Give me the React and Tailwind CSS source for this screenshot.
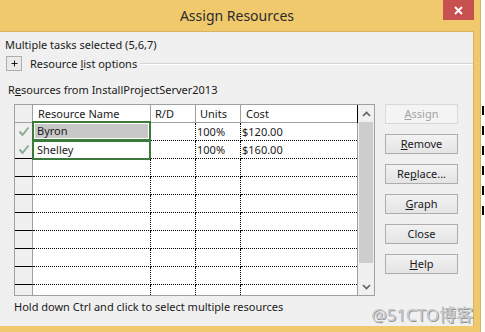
import React from "react";

const F = "font-['Noto_Sans',sans-serif]";

function Check() {
  return (
    <svg width="12" height="11" viewBox="0 0 12 11" className="block">
      <path d="M1.5 5.5 L4.5 9 L10.5 1.5" fill="none" stroke="#86AE94" strokeWidth="2" />
    </svg>
  );
}

function Btn({ children, disabled }) {
  return (
    <div
      className={
        "h-[20px] w-[73px] flex items-center justify-center border text-[11px] leading-[16px] " +
        (disabled
          ? "border-[#D9D9D9] bg-[#F4F4F4] text-[#A3A3A3]"
          : "border-[#ADADAD] bg-gradient-to-b from-[#F2F2F2] to-[#E4E4E4] text-[#1a1a1a]")
      }
    >
      {children}
    </div>
  );
}

const rows = [
  { name: "Byron", units: "100%", cost: "$120.00", check: true, sel: true },
  { name: "Shelley", units: "100%", cost: "$160.00", check: true },
  {}, {}, {}, {}, {}, {}, {}, {},
];

export default function App() {
  return (
    <div className={"w-[485px] h-[332px] bg-[#F0C96D] overflow-hidden flex " + F}>
      <div className="w-[481px] flex flex-col border-r border-[#D8B25E]">
        <div className="h-[31px] relative flex items-center justify-center pr-[6px]">
          <span className="text-[14px] text-[#2b2b2b] leading-[20px]">Assign Resources</span>
          <div className="absolute right-[6px] top-0 w-[31px] h-[20px] bg-[#C75050] flex items-center justify-center">
            <svg width="9" height="9" viewBox="0 0 9 9">
              <path d="M1 1 L8 8 M8 1 L1 8" stroke="#fff" strokeWidth="1.8" />
            </svg>
          </div>
        </div>
        <div className="w-[474px] h-[295px] bg-[#F0F0F0] border-r border-t border-[#D9B460] flex flex-col text-[11px] leading-[16px] text-[#1a1a1a]">
          <div className="mt-[5px] pl-[5px] h-[16px]">Multiple tasks selected (5,6,7)</div>
          <div className="mt-[3px] h-[15px] flex items-center">
            <div className="ml-[6px] w-[16px] h-[15px] border border-[#ADADAD] bg-[#EAEAEA] flex items-center justify-center">
              <svg width="7" height="7" viewBox="0 0 7 7">
                <path d="M3.5 0.5 V6.5 M0.5 3.5 H6.5" stroke="#1a1a1a" strokeWidth="1" />
              </svg>
            </div>
            <span className="ml-[8px]">
              Resource <span className="underline">l</span>ist options
            </span>
            <div className="ml-[3px] flex-1 h-[2px] border-t border-[#D5D5D5] border-b-white border-b" />
          </div>
          <div className="mt-[11px] pl-[8px] h-[16px]">
            R<span className="underline">e</span>sources from InstallProjectServer2013
          </div>
          <div className="mt-[6px] flex">
            <div className="ml-[14px] w-[361px] h-[192px] border border-[#A0A0A0] bg-white flex overflow-hidden">
              <div className="w-[342px] flex flex-col">
                <div className="h-[18px] flex shrink-0 border-b border-[#A0A0A0]">
                  <div className="w-[18px] bg-[#F0F0F0] border-r border-[#A0A0A0]" />
                  <div className="w-[118px] border-r border-[#A0A0A0] pl-[5px] flex items-center">Resource Name</div>
                  <div className="w-[45px] border-r border-[#A0A0A0] pl-[4px] flex items-center">R/D</div>
                  <div className="w-[45px] border-r border-[#A0A0A0] pl-[4px] flex items-center">Units</div>
                  <div className="w-[116px] pl-[5px] flex items-center">Cost</div>
                </div>
                {rows.map((r, i) => (
                  <div key={i} className="h-[18px] flex shrink-0">
                    <div
                      className={
                        "w-[18px] bg-[#F0F0F0] border-r border-[#A0A0A0] border-b flex items-center justify-center " +
                        (i === 0 ? "border-b-[#F0F0F0]" : "border-b-black")
                      }
                    >
                      {r.check ? <Check /> : null}
                    </div>
                    <div className="w-[118px] border-r border-b border-dotted border-black relative">
                      {r.name ? (
                        <div
                          className={
                            "absolute left-[-1px] w-[119px] h-[20px] border-2 border-[#3B7A3B] " +
                            (i === 0 ? "top-[-2px]" : "top-[-1px]")
                          }
                        >
                          <div className={"h-full w-full flex items-center pl-[2px] " + (r.sel ? "bg-[#C8C8C8] border border-white" : "pl-[3px]")}>
                            {r.name}
                          </div>
                        </div>
                      ) : null}
                    </div>
                    <div className="w-[45px] border-r border-b border-dotted border-black" />
                    <div className="w-[45px] border-r border-b border-dotted border-black pl-[1px] flex items-center">{r.units}</div>
                    <div className="w-[116px] border-b border-dotted border-black pl-[1px] flex items-center">{r.cost}</div>
                  </div>
                ))}
              </div>
              <div className="w-[1px] flex flex-col">
                <div className="h-[18px] bg-black shrink-0" />
                <div className="flex-1 bg-[#A0A0A0]" />
              </div>
              <div className="w-[16px] bg-[#F0F0F0] flex flex-col">
                <div className="h-[17px] flex items-center justify-center shrink-0">
                  <svg width="9" height="6" viewBox="0 0 9 6">
                    <path d="M1 5 L4.5 1.5 L8 5" fill="none" stroke="#606060" strokeWidth="1.6" />
                  </svg>
                </div>
                <div className="h-[141px] mx-[1px] bg-[#CDCDCD] shrink-0" />
                <div className="flex-1" />
                <div className="h-[17px] flex items-center justify-center shrink-0">
                  <svg width="9" height="6" viewBox="0 0 9 6">
                    <path d="M1 1 L4.5 4.5 L8 1" fill="none" stroke="#606060" strokeWidth="1.6" />
                  </svg>
                </div>
              </div>
            </div>
            <div className="ml-[10px] flex flex-col gap-[10px]">
              <Btn disabled>
                <span className="underline">A</span>ssign
              </Btn>
              <Btn>
                <span className="underline">R</span>emove
              </Btn>
              <Btn>
                Re<span className="underline">p</span>lace...
              </Btn>
              <Btn>
                <span className="underline">G</span>raph
              </Btn>
              <Btn>Close</Btn>
              <Btn>
                <span className="underline">H</span>elp
              </Btn>
            </div>
          </div>
          <div className="mt-[3px] flex items-start">
            <div className="pl-[14px] h-[16px]">Hold down Ctrl and click to select multiple resources</div>
            <div className="ml-auto mt-[6px] text-[17px] leading-[20px] text-[#C4C4C4] font-['Noto_Sans','Noto_Sans_CJK_SC',sans-serif] [text-shadow:0_0_1px_#fff,1px_1px_0_#888]">
              @51CTO博客
            </div>
          </div>
        </div>
      </div>
      <div className="flex-1 bg-white flex flex-col">
        <div className="h-[100px]" />
        {[0, 1, 2, 3, 4, 5].map((i) => (
          <div key={i} className="h-[20px] flex items-center">
            <div className="ml-[1px] w-[2px] h-[9px] bg-black" />
          </div>
        ))}
      </div>
    </div>
  );
}
